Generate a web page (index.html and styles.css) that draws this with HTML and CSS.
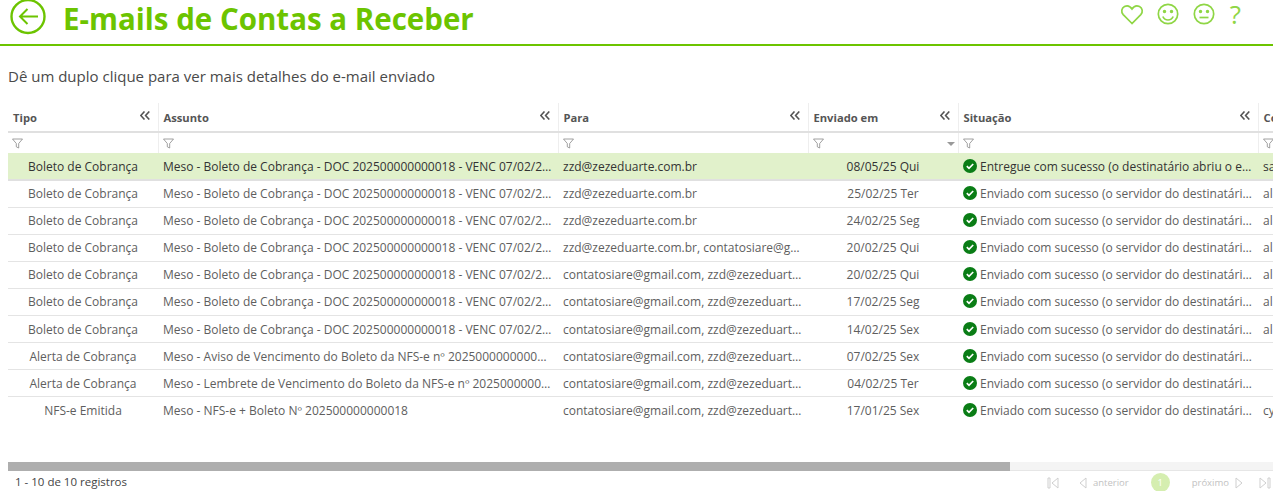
FILE: index.html
```html
<!DOCTYPE html>
<html lang="pt-BR">
<head>
  <meta charset="UTF-8">
  <title>E-mails de Contas a Receber</title>
  <link rel="stylesheet" href="styles.css">
</head>
<body>
  <header class="topo">
    <div class="topo-esq">
      <svg class="voltar" width="38" height="38" viewBox="0 0 38 38" fill="none" stroke="#6cc400"><circle cx="19" cy="17.5" r="16.5" stroke-width="2.4"/><path d="M29 17.5H11M18.5 10l-7.500 7.500 7.500 7.500" stroke-width="2"/></svg>
      <h1>E-mails de Contas a Receber</h1>
    </div>
    <div class="topo-icones">
      <svg width="24" height="24" viewBox="0 0 24 24" fill="none" stroke="#8fd645" stroke-width="1.7"><path d="M12 21.5 3.200 12.600C.8 10 1.500 6 4.500 4.500c2.800-1.300 5.700-.3 7.500 2.500 1.800-2.800 4.700-3.800 7.500-2.500 3 1.500 3.700 5.500 1.300 8.100z"/></svg>
      <svg width="24" height="24" viewBox="0 0 24 24" fill="none" stroke="#8fd645" stroke-width="1.7"><circle cx="12" cy="12" r="9.700"/><circle cx="8.500" cy="9.500" r=".9"/><circle cx="15.500" cy="9.500" r=".9"/><path d="M6.800 14.500c1.200 2.600 3 3.500 5.200 3.500s4-.9 5.200-3.500"/></svg>
      <svg width="24" height="24" viewBox="0 0 24 24" fill="none" stroke="#8fd645" stroke-width="1.700"><circle cx="12" cy="12" r="9.700"/><circle cx="8.500" cy="9.500" r=".9"/><circle cx="15.500" cy="9.500" r=".9"/><path d="M7.500 15.500h9"/></svg>
      <span class="ajuda">?</span>
    </div>
  </header>

  <p class="dica">Dê um duplo clique para ver mais detalhes do e-mail enviado</p>

  <div class="grade">
    <table>
      <colgroup>
        <col class="c-tipo"><col class="c-assunto"><col class="c-para"><col class="c-envio"><col class="c-situacao"><col class="c-outro">
      </colgroup>
      <thead>
        <tr class="titulos">
          <th>Tipo<svg class="recolher" viewBox="0 0 10 9"><path d="M4.500 .5.800 4.500l3.700 4M9.300 .5 5.600 4.500l3.700 4"/></svg></th>
          <th>Assunto<svg class="recolher" viewBox="0 0 10 9"><path d="M4.500 .5.800 4.500l3.700 4M9.300 .5 5.600 4.500l3.700 4"/></svg></th>
          <th>Para<svg class="recolher" viewBox="0 0 10 9"><path d="M4.500 .5.800 4.500l3.700 4M9.300 .5 5.600 4.500l3.700 4"/></svg></th>
          <th>Enviado em<svg class="recolher" viewBox="0 0 10 9"><path d="M4.500 .5.800 4.500l3.700 4M9.300 .5 5.600 4.500l3.700 4"/></svg></th>
          <th>Situação<svg class="recolher" viewBox="0 0 10 9"><path d="M4.500 .5.800 4.500l3.700 4M9.300 .5 5.600 4.500l3.700 4"/></svg></th>
          <th>Conta</th>
        </tr>
        <tr class="filtros">
          <td><svg class="funil" viewBox="0 0 11 11"><path d="M.5 1h10L6.700 5.500V10L4.300 8.800V5.500z"/></svg></td>
          <td><svg class="funil" viewBox="0 0 11 11"><path d="M.5 1h10L6.700 5.500V10L4.300 8.800V5.500z"/></svg></td>
          <td><svg class="funil" viewBox="0 0 11 11"><path d="M.5 1h10L6.700 5.500V10L4.300 8.800V5.500z"/></svg></td>
          <td><svg class="funil" viewBox="0 0 11 11"><path d="M.5 1h10L6.700 5.500V10L4.300 8.800V5.500z"/></svg><span class="seta-filtro"></span></td>
          <td><svg class="funil" viewBox="0 0 11 11"><path d="M.5 1h10L6.700 5.500V10L4.300 8.800V5.500z"/></svg></td>
          <td><svg class="funil" viewBox="0 0 11 11"><path d="M.5 1h10L6.700 5.500V10L4.300 8.800V5.500z"/></svg></td>
        </tr>
      </thead>
      <tbody id="linhas"></tbody>
    </table>
  </div>

  <div class="barra"><div class="barra-polegar"></div></div>

  <footer class="rodape">
    <span>1 - 10 de 10 registros</span>
    <nav class="paginas">
      <svg width="12" height="12" viewBox="0 0 12 12"><path d="M1 1v10h2V1zM11 1 5 6l6 5z"/></svg>
      <svg class="p-ant" width="8" height="12" viewBox="0 0 8 12"><path d="M7 1 1 6l6 5z"/></svg>
      <span class="p-texto">anterior</span>
      <span class="p-atual">1</span>
      <span class="p-texto">próximo</span>
      <svg class="p-prox" width="8" height="12" viewBox="0 0 8 12"><path d="M1 1l6 5-6 5z"/></svg>
      <svg width="12" height="12" viewBox="0 0 12 12"><path d="M1 1l6 5-6 5zM9 1v10h2V1z"/></svg>
    </nav>
  </footer>

  <script>
    const assuntoBoleto = 'Meso - Boleto de Cobrança - DOC 202500000000018 - VENC 07/02/2025';
    const enviado = 'Enviado com sucesso (o servidor do destinatário aceitou o e-mail)';
    const registros = [
      ['Boleto de Cobrança', assuntoBoleto, 'zzd@zezeduarte.com.br', '08/05/25 Qui', 'Entregue com sucesso (o destinatário abriu o e-mail)', 'sa'],
      ['Boleto de Cobrança', assuntoBoleto, 'zzd@zezeduarte.com.br', '25/02/25 Ter', enviado, 'al'],
      ['Boleto de Cobrança', assuntoBoleto, 'zzd@zezeduarte.com.br', '24/02/25 Seg', enviado, 'al'],
      ['Boleto de Cobrança', assuntoBoleto, 'zzd@zezeduarte.com.br, contatosiare@gmail.com', '20/02/25 Qui', enviado, 'al'],
      ['Boleto de Cobrança', assuntoBoleto, 'contatosiare@gmail.com, zzd@zezeduarte.com.br', '20/02/25 Qui', enviado, 'al'],
      ['Boleto de Cobrança', assuntoBoleto, 'contatosiare@gmail.com, zzd@zezeduarte.com.br', '17/02/25 Seg', enviado, 'al'],
      ['Boleto de Cobrança', assuntoBoleto, 'contatosiare@gmail.com, zzd@zezeduarte.com.br', '14/02/25 Sex', enviado, 'al'],
      ['Alerta de Cobrança', 'Meso - Aviso de Vencimento do Boleto da NFS-e nº 202500000000018 - VENC 07/02/2025', 'contatosiare@gmail.com, zzd@zezeduarte.com.br', '07/02/25 Sex', enviado, ''],
      ['Alerta de Cobrança', 'Meso - Lembrete de Vencimento do Boleto da NFS-e nº 202500000000018', 'contatosiare@gmail.com, zzd@zezeduarte.com.br', '04/02/25 Ter', enviado, ''],
      ['NFS-e Emitida', 'Meso - NFS-e + Boleto Nº 202500000000018', 'contatosiare@gmail.com, zzd@zezeduarte.com.br', '17/01/25 Sex', enviado, 'cy']
    ];
    const iconeOk = '<svg class="ok" width="14" height="14" viewBox="0 0 14 14"><circle cx="7" cy="7" r="7" fill="#0a7d16"/><path d="M3.800 7.200 6 9.300l4.200-4.300" fill="none" stroke="#fff" stroke-width="1.700"/></svg>';

    document.getElementById('linhas').innerHTML = registros.map((r, i) => `
      <tr class="${i === 0 ? 'selecionada' : ''}">
        <td class="centro">${r[0]}</td>
        <td>${r[1]}</td>
        <td>${r[2]}</td>
        <td class="centro">${r[3]}</td>
        <td>${iconeOk}${r[4]}</td>
        <td>${r[5]}</td>
      </tr>`).join('');
  </script>
</body>
</html>
```

FILE: styles.css
```css
* { box-sizing: border-box; }
html, body { overflow: hidden; }
body {
  margin: 0;
  height: 491px;
  font-family: "Open Sans", sans-serif;
  font-size: 12px;
  color: #555;
  background: #fff;
}

.topo {
  display: flex;
  justify-content: space-between;
  height: 46px;
  padding: 0 32px 0 9px;
  border-bottom: 2px solid #6cc400;
}
.topo-esq { display: flex; align-items: flex-start; gap: 16px; }
.voltar { flex: none; margin-top: -1px; }
h1 {
  margin: 0;
  font-size: 29.500px;
  line-height: 37px;
  font-weight: 700;
  color: #6cc400;
}
.topo-icones { display: flex; gap: 12px; padding-top: 2px; height: 38px; }
.ajuda {
  font-size: 26px;
  line-height: 36px;
  margin: -6px 0 0 2px;
  color: #8fd645;
}

.dica {
  margin: 20px 8px 0;
  font-size: 15px;
  line-height: 20px;
  color: #4a4a4a;
}

.grade {
  margin: 17px 0 0 8px;
  height: 359px;
  overflow: hidden;
}
table {
  table-layout: fixed;
  width: 1300px;
  border-collapse: collapse;
}
.c-tipo { width: 150px; }
.c-assunto { width: 400px; }
.c-para { width: 250px; }
.c-envio { width: 150px; }
.c-situacao { width: 300px; }
.c-outro { width: 50px; }

th, td {
  padding: 0 5px;
  white-space: nowrap;
  overflow: hidden;
  text-overflow: ellipsis;
}
.titulos th {
  position: relative;
  height: 29px;
  text-align: left;
  font-size: 11.200px;
  font-weight: 700;
  color: #555;
  border-left: 1px solid #eee;
  border-bottom: 2px solid #e0e0e0;
}
.titulos th:first-child { border-left: 0; }
.recolher {
  position: absolute;
  right: 8px;
  top: 8px;
  width: 10px;
  height: 9px;
  fill: none;
  stroke: #555;
  stroke-width: 1.600;
}
.filtros td {
  position: relative;
  height: 21px;
  padding-left: 4px;
  border-left: 1px solid #eee;
  line-height: 0;
}
.filtros td:first-child { border-left: 0; }
.funil { width: 11px; height: 11px; fill: none; stroke: #888; stroke-width: .8; }
.seta-filtro {
  position: absolute;
  right: 3px;
  top: 9px;
  border: 4px solid transparent;
  border-top: 4px solid #999;
  border-bottom: 0;
}

tbody tr { height: 27.090px; border-bottom: 1px solid #e4e4e4; }
tbody td { font-size: 12px; color: #5e5e5e; }
tbody td.centro { text-align: center; }
tbody tr.selecionada { background: #e1f1cb; border-bottom: 2px solid #e0e0e0; }
tbody tr.selecionada td { color: #333; }
tbody tr:last-child { border-bottom: 0; }
.ok { vertical-align: -2px; margin-right: 3px; }

.barra {
  margin-left: 8px;
  height: 9px;
  background: #f4f4f4;
  border-bottom: 1px solid #e6e6e6;
}
.barra-polegar { width: 1002px; height: 9px; background: #aeaeae; }

.rodape {
  display: flex;
  justify-content: space-between;
  align-items: center;
  height: 20px;
  padding: 0 2px 0 15px;
  font-size: 11.500px;
  color: #444;
}
.paginas {
  display: flex;
  align-items: center;
  padding-top: 3px;
  color: #c2c2c2;
  font-size: 9.500px;
}
.paginas svg { fill: none; stroke: #cfcfcf; stroke-width: 1; }
.p-ant { margin: 0 6px 0 20px; }
.p-prox { margin: 0 16px 0 6px; }
.p-atual {
  width: 19px;
  height: 19px;
  margin: 0 22px;
  border-radius: 50%;
  background: #d5eeb0;
  color: #fff;
  text-align: center;
  line-height: 19px;
}
```
